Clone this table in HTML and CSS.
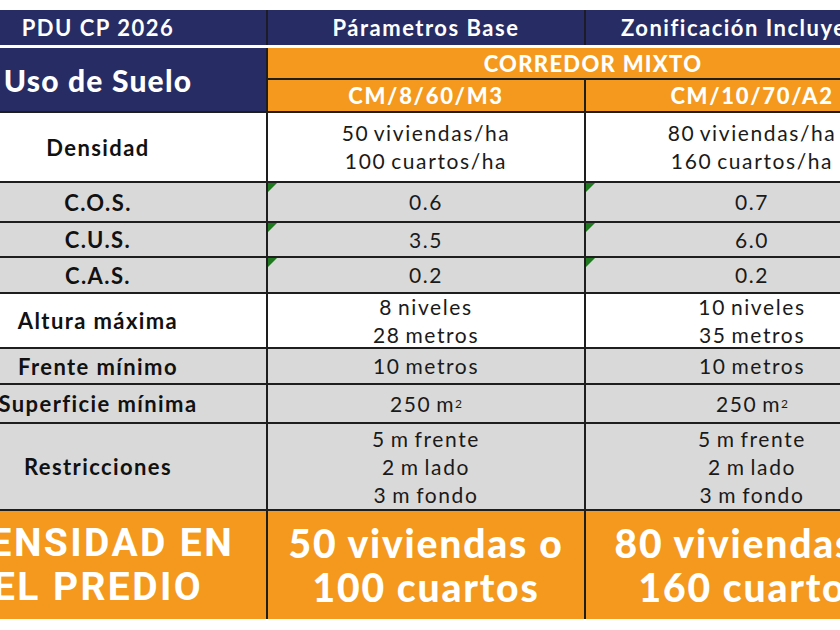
FILE: index.html
```html
<!DOCTYPE html>
<html lang="es">
<head>
<meta charset="utf-8">
<title>PDU CP 2026</title>
<link rel="stylesheet" href="styles.css">
</head>
<body>
<div class="viewport">
  <div class="sheet">
    <div class="head">
      <div class="hcell">PDU CP 2026</div>
      <div class="hcell">Párametros Base</div>
      <div class="hcell">Zonificación Incluyente</div>
    </div>
    <div class="spacer"></div>
    <div class="grid">
      <div class="uso">Uso de Suelo</div>
      <div class="zone">CORREDOR MIXTO</div>
      <div class="code">CM/8/60/M3</div>
      <div class="code">CM/10/70/A2</div>

      <div class="lbl">Densidad</div>
      <div class="val">50 viviendas/ha<br>100 cuartos/ha</div>
      <div class="val">80 viviendas/ha<br>160 cuartos/ha</div>

      <div class="lbl gray">C.O.S.</div>
      <div class="val gray flag">0.6</div>
      <div class="val gray flag">0.7</div>

      <div class="lbl gray">C.U.S.</div>
      <div class="val gray flag">3.5</div>
      <div class="val gray flag">6.0</div>

      <div class="lbl gray">C.A.S.</div>
      <div class="val gray flag">0.2</div>
      <div class="val gray flag">0.2</div>

      <div class="lbl">Altura máxima</div>
      <div class="val">8 niveles<br>28 metros</div>
      <div class="val">10 niveles<br>35 metros</div>

      <div class="lbl gray">Frente mínimo</div>
      <div class="val gray">10 metros</div>
      <div class="val gray">10 metros</div>

      <div class="lbl gray">Superficie mínima</div>
      <div class="val gray">250 m<sup>2</sup></div>
      <div class="val gray">250 m<sup>2</sup></div>

      <div class="lbl gray">Restricciones</div>
      <div class="val gray">5 m frente<br>2 m lado<br>3 m fondo</div>
      <div class="val gray">5 m frente<br>2 m lado<br>3 m fondo</div>

      <div class="big big-lbl">DENSIDAD EN<br>EL PREDIO</div>
      <div class="big">50 viviendas o<br>100 cuartos</div>
      <div class="big">80 viviendas o<br>160 cuartos</div>
    </div>
  </div>
</div>
</body>
</html>
```

FILE: styles.css
```css
html, body {
  margin: 0;
  padding: 0;
  background: #ffffff;
}

.viewport {
  width: 840px;
  height: 630px;
  overflow: hidden;
  background: #ffffff;
}

.sheet {
  margin-left: -70px;
  padding-top: 10px;
  width: 988px;
  font-family: Lato, "Noto Sans", sans-serif;
}

.head {
  display: grid;
  grid-template-columns: 336px 316px 332px;
  column-gap: 2px;
  background: #1c1c28;
  height: 35px;
}

.hcell {
  background: #272d64;
  color: #ffffff;
  font-weight: 700;
  font-size: 22px;
  display: flex;
  align-items: center;
  justify-content: center;
  white-space: nowrap;
  letter-spacing: 1.5px;
}

.spacer {
  height: 3px;
  background: #ffffff;
}

.grid {
  display: grid;
  grid-template-columns: 336px 316px 332px;
  grid-template-rows: 30px 31px 68px 38px 33px 34px 53px 34px 37px 85px 108px;
  gap: 2px;
  background: #1e1e1e;
}

.grid > div {
  display: flex;
  align-items: center;
  justify-content: center;
  text-align: center;
  white-space: nowrap;
  position: relative;
}

.uso {
  grid-row: 1 / span 2;
  background: #272d64;
  color: #ffffff;
  font-weight: 900;
  font-size: 30px;
  letter-spacing: 1.2px;
}

.zone {
  grid-column: 2 / span 2;
  background: #f4991d;
  color: #ffffff;
  font-weight: 900;
  font-size: 22px;
  letter-spacing: 1.3px;
}

.code {
  background: #f4991d;
  color: #ffffff;
  font-weight: 900;
  font-size: 22px;
  letter-spacing: 1.7px;
}

.lbl {
  background: #ffffff;
  color: #111111;
  font-weight: 700;
  font-size: 22px;
  letter-spacing: 1.4px;
}

.val {
  background: #ffffff;
  color: #1a1a1a;
  font-weight: 400;
  font-size: 21px;
  line-height: 28px;
  letter-spacing: 1.6px;
  word-spacing: -2px;
}

.gray {
  background: #d9d9d9 !important;
}

.val sup {
  font-size: 12px;
  line-height: 0;
  vertical-align: 10px;
  letter-spacing: 0;
}

.flag::before {
  content: "";
  position: absolute;
  left: 0;
  top: 0;
  border-top: 9px solid #1f7a1f;
  border-right: 9px solid transparent;
}

.big {
  background: #f4991d;
  color: #ffffff;
  font-weight: 900;
  font-size: 39px;
  line-height: 44px;
  letter-spacing: 1.8px;
}

.big-lbl {
  font-family: Roboto, "Liberation Sans", sans-serif;
  font-weight: 700;
  font-size: 39px;
  letter-spacing: 2.4px;
}
```
